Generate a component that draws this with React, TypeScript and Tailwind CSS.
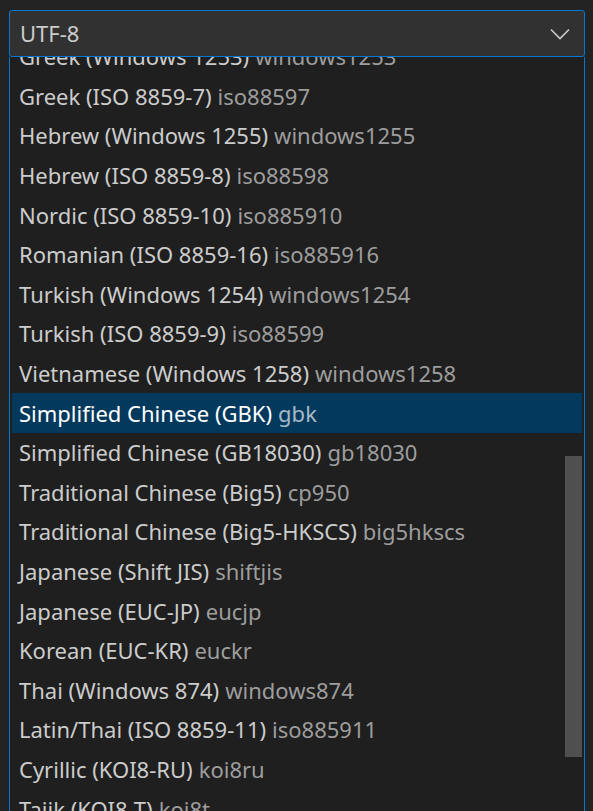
const items: [string, string][] = [
  ["Greek (Windows 1253)", "windows1253"],
  ["Greek (ISO 8859-7)", "iso88597"],
  ["Hebrew (Windows 1255)", "windows1255"],
  ["Hebrew (ISO 8859-8)", "iso88598"],
  ["Nordic (ISO 8859-10)", "iso885910"],
  ["Romanian (ISO 8859-16)", "iso885916"],
  ["Turkish (Windows 1254)", "windows1254"],
  ["Turkish (ISO 8859-9)", "iso88599"],
  ["Vietnamese (Windows 1258)", "windows1258"],
  ["Simplified Chinese (GBK)", "gbk"],
  ["Simplified Chinese (GB18030)", "gb18030"],
  ["Traditional Chinese (Big5)", "cp950"],
  ["Traditional Chinese (Big5-HKSCS)", "big5hkscs"],
  ["Japanese (Shift JIS)", "shiftjis"],
  ["Japanese (EUC-JP)", "eucjp"],
  ["Korean (EUC-KR)", "euckr"],
  ["Thai (Windows 874)", "windows874"],
  ["Latin/Thai (ISO 8859-11)", "iso885911"],
  ["Cyrillic (KOI8-RU)", "koi8ru"],
  ["Tajik (KOI8-T)", "koi8t"],
];

export default function App() {
  return (
    <div
      className="h-[811px] w-[593px] overflow-hidden bg-[#232323] pt-[10px] pl-[9px] pr-[8px]"
      style={{ fontFamily: '"Noto Sans", "Open Sans", sans-serif' }}
    >
      <div className="flex h-[47px] items-center justify-between rounded-[3px] border border-[#0078d4] bg-[#313131] pl-[10px] pr-[14px] text-[22px] text-[#cccccc]">
        <span>UTF-8</span>
        <svg width="20" height="12" viewBox="0 0 20 12" fill="none">
          <path d="M1 1.5 L10 10.5 L19 1.5" stroke="#cccccc" strokeWidth="1.6" />
        </svg>
      </div>
      <div className="relative h-[760px] overflow-hidden border-x border-[#0078d4] bg-[#1f1f1f]">
        <div className="-mt-[20px] flex flex-col px-[2px]">
          {items.map(([name, code]) => {
            const sel = code === "gbk";
            return (
              <div
                key={code}
                className={
                  "flex h-[39.6px] items-center whitespace-nowrap pl-[7px] text-[22px] " +
                  (sel ? "bg-[#04395e] text-white" : "text-[#cccccc]")
                }
              >
                <span>{name}</span>
                <span className={"ml-[6px] " + (sel ? "text-[#a4b9c8]" : "text-[#9d9d9d]")}>{code}</span>
              </div>
            );
          })}
        </div>
        <div className="absolute right-[2px] top-[399px] h-[301px] w-[17px] bg-[#4f4f4f]" />
      </div>
    </div>
  );
}
